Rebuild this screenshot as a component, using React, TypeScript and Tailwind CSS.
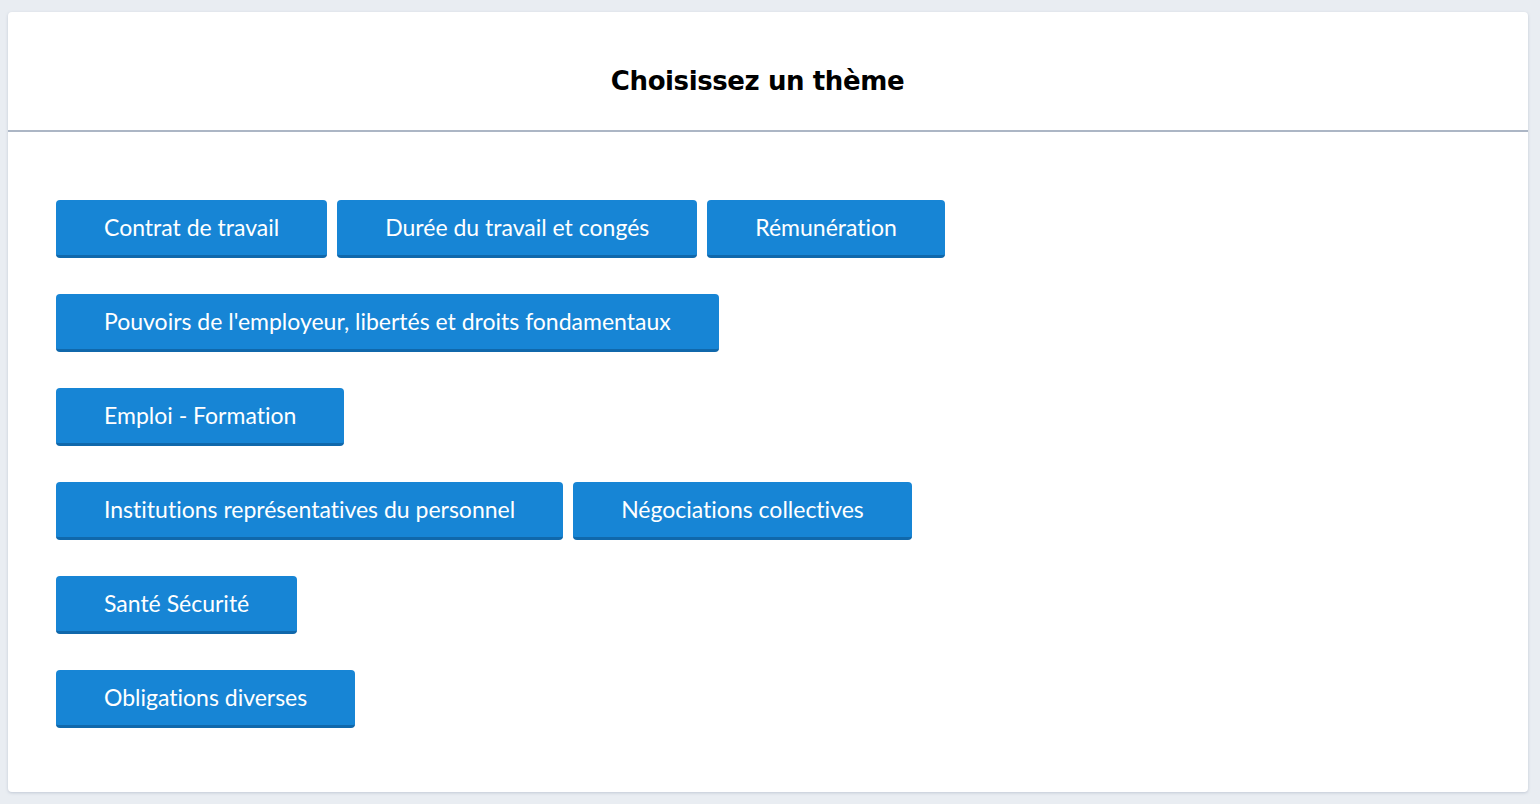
import React from "react";

const rows: string[][] = [
  ["Contrat de travail", "Durée du travail et congés", "Rémunération"],
  ["Pouvoirs de l'employeur, libertés et droits fondamentaux"],
  ["Emploi - Formation"],
  ["Institutions représentatives du personnel", "Négociations collectives"],
  ["Santé Sécurité"],
  ["Obligations diverses"],
];

const App: React.FC = () => {
  return (
    <div className="min-h-screen bg-[#e9edf2] px-2 pt-3 pb-3 box-border h-[804px]">
      <div className="h-full w-[1520px] rounded bg-white shadow-[0_1px_3px_rgba(120,135,160,0.35)]">
        {/* Header */}
        <div className="flex h-[120px] justify-center border-b-2 border-[#acb6c5] pt-[51px] pr-[21px]">
          <h1 className="font-['DejaVu_Sans',sans-serif] text-[26px] leading-[36px] font-bold tracking-[-0.4px] text-black">
            Choisissez un thème
          </h1>
        </div>

        {/* Theme buttons */}
        <div className="flex flex-col gap-9 px-12 pt-[68px]">
          {rows.map((row, i) => (
            <div key={i} className="flex gap-[10px]">
              {row.map((label) => (
                <button
                  key={label}
                  className="h-[58px] rounded border-b-[3px] border-[#1068ab] bg-[#1785d5] px-12 font-['Lato',sans-serif] text-[23px] text-white [font-variant-ligatures:none]"
                >
                  {label}
                </button>
              ))}
            </div>
          ))}
        </div>
      </div>
    </div>
  );
};

export default App;
